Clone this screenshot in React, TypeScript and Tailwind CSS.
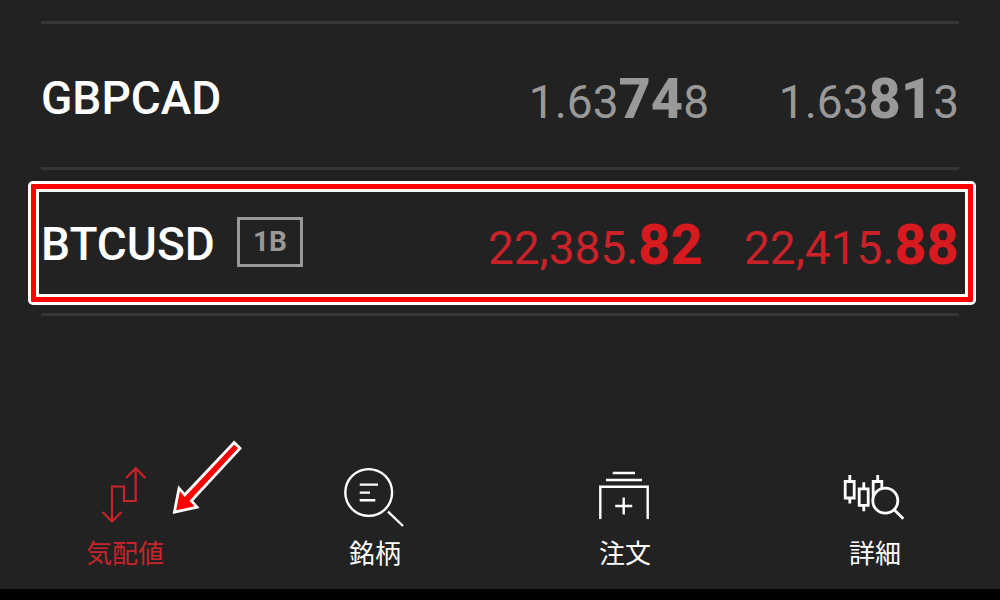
import type { ReactNode } from 'react';

interface Quote {
  symbol: string;
  badge?: string;
  bid: [string, string, string];
  ask: [string, string, string];
  down?: boolean;
  highlighted?: boolean;
}

interface NavItem {
  label: string;
  icon: ReactNode;
  active?: boolean;
}

const quotes: Quote[] = [
  { symbol: 'GBPCAD', bid: ['1.63', '74', '8'], ask: ['1.63', '81', '3'] },
  {
    symbol: 'BTCUSD',
    badge: '1B',
    bid: ['22,385.', '82', ''],
    ask: ['22,415.', '88', ''],
    down: true,
    highlighted: true,
  },
];

function Icon({ width, children }: { width: number; children: ReactNode }) {
  return (
    <svg
      className="h-16 w-16"
      viewBox="0 0 64 64"
      fill="none"
      stroke="currentColor"
      strokeWidth={width}
      aria-hidden="true"
    >
      {children}
    </svg>
  );
}

const navItems: NavItem[] = [
  {
    label: '気配値',
    active: true,
    icon: (
      <Icon width={2.2}>
        <path d="M42.7 5V37H31V22.5H19V57" />
        <path d="M33 14L42.7 4.3L52.4 14M9.5 48L19 57.5L28.5 48" />
      </Icon>
    ),
  },
  {
    label: '銘柄',
    icon: (
      <Icon width={2.4}>
        <circle cx="25.7" cy="28.5" r="23.4" />
        <path d="M45 47.7L60 62M16.7 20.6H35M16.7 28.6H27M16.7 36.3H32.3" />
      </Icon>
    ),
  },
  {
    label: '注文',
    icon: (
      <Icon width={2.4}>
        <path d="M19.7 9H42M13 16H49M7.3 55V22.7H54.7V55" />
        <path d="M30.7 33.5V50.5M22.2 42H39.2" />
      </Icon>
    ),
  },
  {
    label: '詳細',
    icon: (
      <Icon width={2.8}>
        <path d="M2.2 17.5H11.2V34H2.2ZM6.8 11V17.5M6.8 34V39.5" />
        <path d="M16.2 24.8H25.2V41.4H16.2ZM20.8 18.3V24.8M20.8 41.4V47.3" />
        <path d="M30.2 34V17.5H38.8V26M34.7 11V17.5" />
        <circle cx="42.3" cy="36.7" r="12.5" fill="#222222" />
        <path d="M51 45.4L60.3 54.7" />
      </Icon>
    ),
  },
];

function Price({ parts, down }: { parts: [string, string, string]; down?: boolean }) {
  const [head, pips, tail] = parts;
  return (
    <span className="min-w-[250px] pl-[41px] text-right text-[46px] leading-[64px] whitespace-nowrap">
      {head}
      <span className={down ? 'text-[56px] font-extrabold text-[#d71920]' : 'text-[56px] font-extrabold'}>
        {pips}
      </span>
      {tail}
    </span>
  );
}

function QuoteRow({ quote }: { quote: Quote }) {
  return (
    <li className="relative flex h-[146px] items-center justify-between border-b-3 border-[#363636]">
      <div className="flex items-center gap-[22px]">
        <span className="pt-1 text-[46px] leading-[64px] font-medium text-white">{quote.symbol}</span>
        {quote.badge && (
          <span className="flex h-[50px] w-[66px] items-center justify-center border-3 border-[#999999] text-[28px] font-bold text-[#999999]">
            {quote.badge}
          </span>
        )}
      </div>
      <div className={quote.down ? 'flex pt-[10px] text-[#cb2128]' : 'flex pt-[10px] text-[#999999]'}>
        <Price parts={quote.bid} down={quote.down} />
        <Price parts={quote.ask} down={quote.down} />
      </div>
      {quote.highlighted && (
        <div className="pointer-events-none absolute top-[11px] -right-[17px] bottom-[8px] -left-[13px] rounded-[5px] border-3 border-white">
          <div className="h-full rounded-xs border-5 border-[#ff0000]">
            <div className="h-full border-3 border-white" />
          </div>
        </div>
      )}
    </li>
  );
}

function Pointer() {
  return (
    <svg
      className="pointer-events-none absolute -top-6 left-1/2 ml-[45px] h-20 w-20"
      viewBox="0 0 80 80"
      fill="#ff0000"
      stroke="#ffffff"
      strokeWidth="2.8"
      aria-hidden="true"
    >
      <path d="M4.4 72.2L9 48.2L14.8 54.8L64.2 2.6L70 8.2L21.4 60.8L27 67.2Z" />
    </svg>
  );
}

export default function App() {
  return (
    <div className="flex min-h-screen flex-col bg-[#222222] font-[Roboto,'Noto_Sans_CJK_JP',sans-serif]">
      <main className="px-[41px] pt-[21px]">
        <ul className="border-t-3 border-[#363636]">
          {quotes.map((q) => (
            <QuoteRow key={q.symbol} quote={q} />
          ))}
        </ul>
      </main>

      <nav className="mt-auto grid grid-cols-4 pb-[15px]">
        {navItems.map((item) => (
          <a
            key={item.label}
            href="#"
            aria-current={item.active ? 'page' : undefined}
            className={
              item.active
                ? 'relative flex flex-col items-center gap-1.5 text-[#c9242b]'
                : 'flex flex-col items-center gap-1.5 text-white'
            }
          >
            {item.icon}
            <span className="text-[26px] leading-10">{item.label}</span>
            {item.active && <Pointer />}
          </a>
        ))}
      </nav>
      <div className="h-[11px] bg-black" />
    </div>
  );
}
